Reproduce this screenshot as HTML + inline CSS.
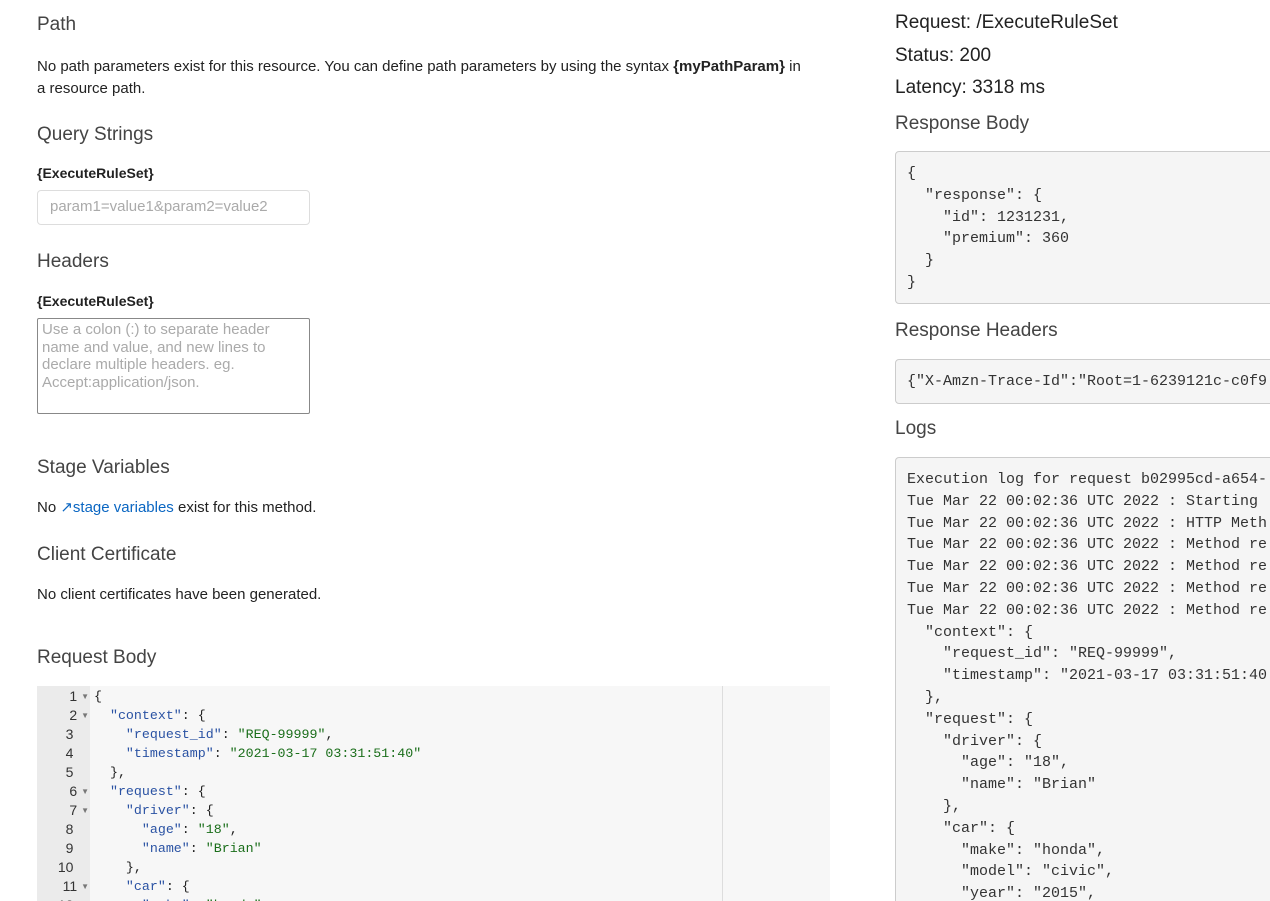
<!DOCTYPE html>
<html style="width:1270px;height:901px;overflow:hidden"><head><meta charset="utf-8"><style>
*{margin:0;padding:0;box-sizing:border-box}
body{width:1270px;height:901px;overflow:hidden;background:#fff;font-family:"Liberation Sans",Arial,sans-serif;color:#222;position:relative;font-size:15px}
.a{position:absolute;white-space:nowrap}
h{position:absolute;font-size:19px;color:#444;white-space:nowrap;margin-top:2px}
.b{font-weight:bold;font-size:14px;color:#222}
.box{position:absolute;background:#f5f5f5;border:1px solid #ccc;border-radius:4px;overflow:hidden}
pre{font-family:"Liberation Mono",monospace;font-size:15px;line-height:21.8px;color:#333}
.ed{font-family:"Liberation Mono",monospace;font-size:13.3px;line-height:19px}
.k{color:#2a52a3}.s{color:#1a6e1a}
.ar{font-size:8px;color:#777;vertical-align:2px}
</style></head><body>
<h style="left:37px;top:12px">Path</h>
<div class="a" style="left:37px;top:56px;line-height:22px;white-space:normal;width:770px">No path parameters exist for this resource. You can define path parameters by using the syntax <b>{myPathParam}</b> in a resource path.</div>
<h style="left:37px;top:122px">Query Strings</h>
<div class="a b" style="left:37px;top:165px">{ExecuteRuleSet}</div>
<div class="a" style="left:37px;top:190px;width:273px;height:35px;border:1px solid #ddd;border-radius:4px;color:#aaa;padding:7px 0 0 12px">param1=value1&amp;param2=value2</div>
<h style="left:37px;top:249px">Headers</h>
<div class="a b" style="left:37px;top:293px">{ExecuteRuleSet}</div>
<div class="a" style="left:37px;top:318px;width:273px;height:96px;border:1px solid #888;border-radius:2px;color:#aaa;padding:2px 4px;white-space:normal;font-size:15px;line-height:17.5px">Use a colon (:) to separate header name and value, and new lines to declare multiple headers. eg. Accept:application/json.</div>
<h style="left:37px;top:455px">Stage Variables</h>
<div class="a" style="left:37px;top:498px">No <span style="color:#0a66c2">&#8599;stage variables</span> exist for this method.</div>
<h style="left:37px;top:542px">Client Certificate</h>
<div class="a" style="left:37px;top:586px">No client certificates have been generated.</div>
<h style="left:37px;top:645px">Request Body</h>
<div class="a" style="left:37px;top:686px;width:793px;height:215px;background:#f7f7f7;overflow:hidden">
 <div style="position:absolute;left:0;top:0;width:53px;height:215px;background:#ebebeb"></div>
 <div style="position:absolute;left:685px;top:0;width:1px;height:215px;background:#ddd"></div>
 <div class="ed" style="position:absolute;left:0;top:1px;width:52px;text-align:right;color:#333;white-space:pre;font-family:'Liberation Sans',sans-serif;font-size:14px">1 <span class="ar">&#9660;</span>
2 <span class="ar">&#9660;</span>
3    
4    
5    
6 <span class="ar">&#9660;</span>
7 <span class="ar">&#9660;</span>
8    
9    
10    
11 <span class="ar">&#9660;</span>
12    </div>
 <div class="ed" style="position:absolute;left:57px;top:1px;white-space:pre;color:#222">{
  <span class="k">"context"</span>: {
    <span class="k">"request_id"</span>: <span class="s">"REQ-99999"</span>,
    <span class="k">"timestamp"</span>: <span class="s">"2021-03-17 03:31:51:40"</span>
  },
  <span class="k">"request"</span>: {
    <span class="k">"driver"</span>: {
      <span class="k">"age"</span>: <span class="s">"18"</span>,
      <span class="k">"name"</span>: <span class="s">"Brian"</span>
    },
    <span class="k">"car"</span>: {
      <span class="k">"make"</span>: <span class="s">"honda"</span>,</div>
</div>
<div class="a" style="left:895px;top:7px;font-size:19px;line-height:32.5px;color:#222">Request: /ExecuteRuleSet<br>Status: 200<br>Latency: 3318 ms</div>
<h style="left:895px;top:111px">Response Body</h>
<div class="box" style="left:895px;top:151px;width:390px;height:153px"><pre style="padding:11px 0 0 11px">{
  "response": {
    "id": 1231231,
    "premium": 360
  }
}</pre></div>
<h style="left:895px;top:318px">Response Headers</h>
<div class="box" style="left:895px;top:359px;width:390px;height:45px"><pre style="padding:11px 0 0 11px">{"X-Amzn-Trace-Id":"Root=1-6239121c-c0f9</pre></div>
<h style="left:895px;top:416px">Logs</h>
<div class="box" style="left:895px;top:457px;width:390px;height:444px;border-bottom:none;border-radius:4px 4px 0 0"><pre style="padding:11px 0 0 11px">Execution log for request b02995cd-a654-
Tue Mar 22 00:02:36 UTC 2022 : Starting 
Tue Mar 22 00:02:36 UTC 2022 : HTTP Meth
Tue Mar 22 00:02:36 UTC 2022 : Method re
Tue Mar 22 00:02:36 UTC 2022 : Method re
Tue Mar 22 00:02:36 UTC 2022 : Method re
Tue Mar 22 00:02:36 UTC 2022 : Method re
  "context": {
    "request_id": "REQ-99999",
    "timestamp": "2021-03-17 03:31:51:40
  },
  "request": {
    "driver": {
      "age": "18",
      "name": "Brian"
    },
    "car": {
      "make": "honda",
      "model": "civic",
      "year": "2015",</pre></div>
</body></html>
